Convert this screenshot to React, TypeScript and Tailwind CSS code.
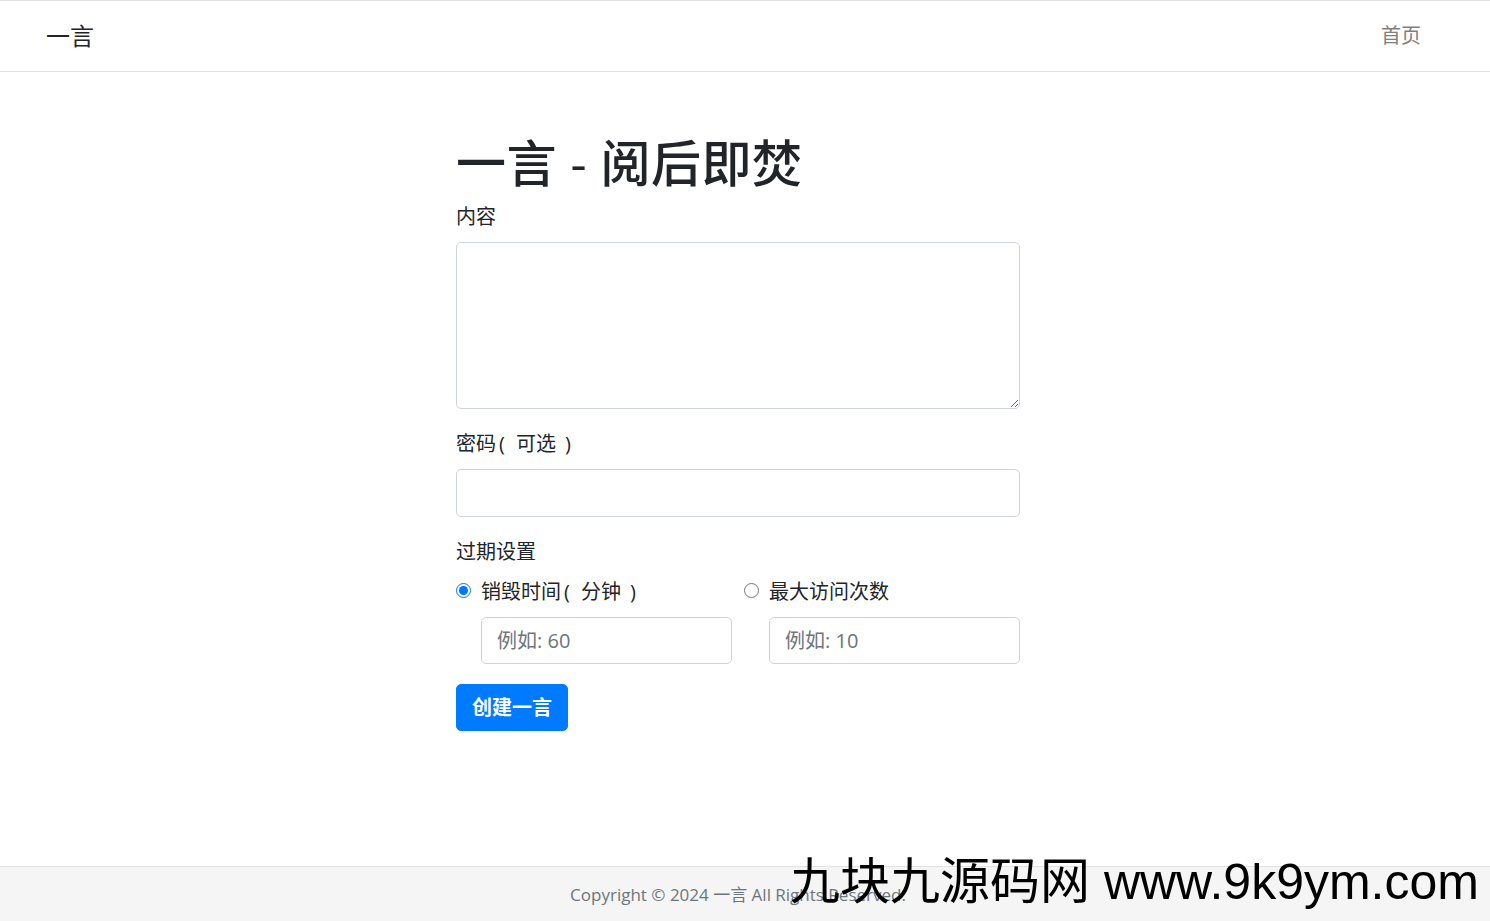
function Open() {
  return <span className="inline-block pl-[3px] pr-[11px]">(</span>;
}

function Close() {
  return <span className="inline-block pl-[9px]">)</span>;
}

export default function App() {
  return (
    <div className="relative flex min-h-[921px] flex-col bg-white text-[#212529] [font-family:'Open_Sans','Noto_Sans_CJK_SC',sans-serif]">
      <nav className="flex h-[72px] items-center justify-between border-y border-[#e2e2e2] pl-[46px] pr-[69px]">
        <a href="#" className="text-[24px] leading-none text-[#212529]">
          一言
        </a>
        <a href="#" className="text-[20px] leading-none text-[#7f7f7f]">
          首页
        </a>
      </nav>

      <main className="flex-1 pl-[456px] pt-[60px]">
        <form className="w-[564px]" onSubmit={(e) => e.preventDefault()}>
          <h1 className="mb-[10px] pt-[2px] text-[50px] font-medium leading-[58px] tracking-[0.5px]">一言 - 阅后即焚</h1>

          <div className="mb-[20px]">
            <label className="mb-[10px] block text-[20px] leading-[30px]">内容</label>
            <textarea
              rows={5}
              className="block h-[167px] w-full rounded-[5px] border border-[#ced4da] px-[15px] py-[7px] text-[20px] leading-[30px] outline-none"
            />
          </div>

          <div className="mb-[20px]">
            <label className="mb-[10px] block text-[20px] leading-[30px]">
              密码<Open />可选<Close />
            </label>
            <input
              type="password"
              className="block h-[48px] w-full rounded-[5px] border border-[#ced4da] px-[15px] text-[20px] outline-none"
            />
          </div>

          <div className="mb-[20px]">
            <label className="mb-[10px] block text-[20px] leading-[30px]">过期设置</label>
            <div className="grid grid-cols-2 gap-x-[12px]">
              <div>
                <label className="flex h-[30px] items-center gap-[10px] text-[20px] leading-[30px]">
                  <input
                    type="radio"
                    name="expire"
                    defaultChecked
                    className="m-0 -mt-[3px] h-[15px] w-[15px] shrink-0 accent-[#0075ff]"
                  />
                  <span>
                    销毁时间<Open />分钟<Close />
                  </span>
                </label>
                <input
                  type="number"
                  placeholder="例如: 60"
                  className="mt-[10px] ml-[25px] block h-[47px] w-[251px] rounded-[5px] border border-[#ced4da] px-[15px] text-[20px] outline-none placeholder:text-[#6c757d]"
                />
              </div>
              <div>
                <label className="flex h-[30px] items-center gap-[10px] text-[20px] leading-[30px]">
                  <input
                    type="radio"
                    name="expire"
                    className="m-0 -mt-[3px] h-[15px] w-[15px] shrink-0 accent-[#0075ff]"
                  />
                  最大访问次数
                </label>
                <input
                  type="number"
                  placeholder="例如: 10"
                  className="mt-[10px] ml-[25px] block h-[47px] w-[251px] rounded-[5px] border border-[#ced4da] px-[15px] text-[20px] outline-none placeholder:text-[#6c757d]"
                />
              </div>
            </div>
          </div>

          <button
            type="submit"
            className="h-[47px] w-[112px] rounded-[5px] border border-[#007bff] bg-[#007bff] text-[20px] font-semibold text-white"
          >
            创建一言
          </button>
        </form>
      </main>

      <footer className="relative flex h-[55px] items-center border-t border-[#e2e2e2] bg-[#f5f5f5] pl-[456px]">
        <p className="w-[564px] pt-[2px] text-center text-[17px] text-[#6c757d]">
          Copyright © 2024 一言 All Rights Reserved.
        </p>
        <span className="absolute left-[790px] top-[-10px] whitespace-nowrap text-[50px] leading-none text-black [font-family:'Liberation_Sans','Noto_Sans_CJK_SC',sans-serif]">
          九块九源码网 www.9k9ym.com
        </span>
      </footer>
    </div>
  );
}
